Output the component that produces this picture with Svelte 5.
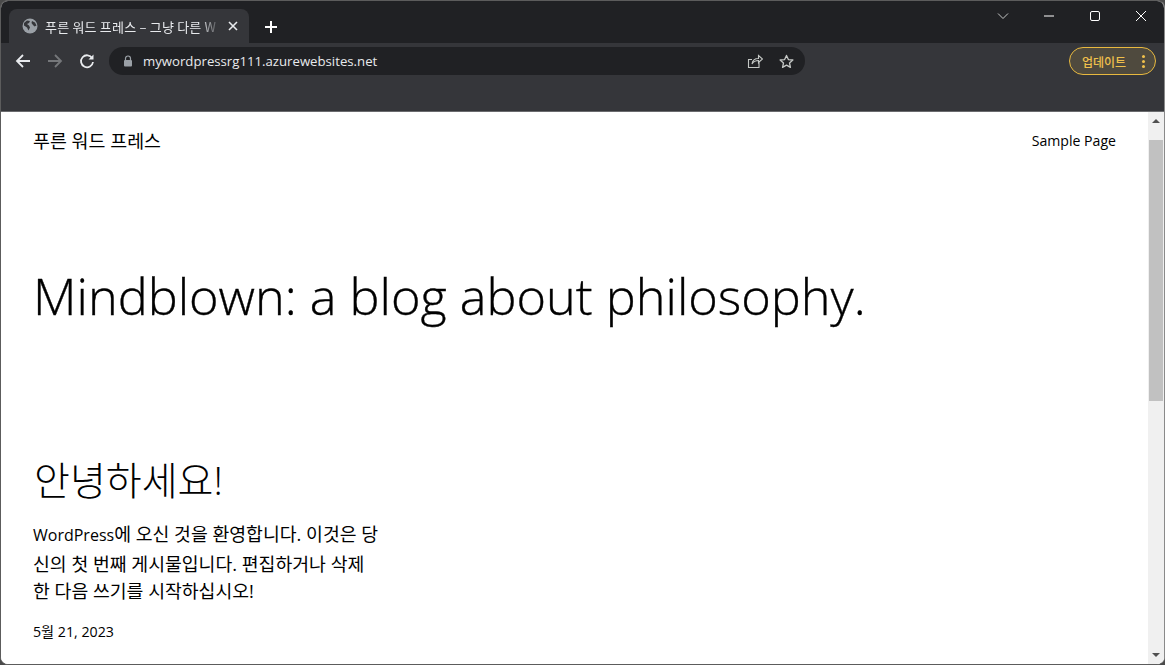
<script lang="ts">
	const bodyLines = [
		'신의 첫 번째 게시물입니다. 편집하거나 삭제',
		'한 다음 쓰기를 시작하십시오!'
	];
</script>

<div class="window">
	<header class="tabstrip">
		<div class="tab">
			<svg class="globe" width="16" height="16" viewBox="0 0 16 16">
				<circle cx="8" cy="8" r="7.5" fill="#9aa0a6" />
				<path d="M2 5l3-2.5 3 .5-1 2-2 1 2 1.5 1 2-1.5 3L5 9.5 2 7.5zM10 3l3 1.5 1.5 3-2 1-1.500-1.500L9.500 5z" fill="#35363a" />
			</svg>
			<span class="tab-title">푸른 워드 프레스 – 그냥 다른 W</span>
			<svg class="tab-close" width="10" height="10" viewBox="0 0 10 10">
				<path d="M1 1l8 8M9 1L1 9" stroke="#e8eaed" stroke-width="1.600" />
			</svg>
		</div>
		<svg class="new-tab" width="14" height="14" viewBox="0 0 14 14">
			<path d="M7 1v12M1 7h12" stroke="#fff" stroke-width="2" />
		</svg>
		<div class="window-controls">
			<svg width="12" height="8" viewBox="0 0 12 8"><path d="M1 1.500l5 5 5-5" fill="none" stroke="#c4c7c5" /></svg>
			<svg width="12" height="12" viewBox="0 0 12 12"><path d="M1 6h10" stroke="#fff" /></svg>
			<svg width="12" height="12" viewBox="0 0 12 12"><rect x="1.500" y="1.500" width="9" height="9" rx="1.500" fill="none" stroke="#fff" /></svg>
			<svg width="12" height="12" viewBox="0 0 12 12"><path d="M1 1l10 10M11 1L1 11" stroke="#fff" /></svg>
		</div>
	</header>

	<div class="toolbar">
		<div class="nav-row">
			<div class="nav-icons">
				<svg width="16" height="16" viewBox="0 0 16 16"><path d="M15 8H2M8 2L2 8l6 6" fill="none" stroke="#e8eaed" stroke-width="1.800" /></svg>
				<svg width="16" height="16" viewBox="0 0 16 16"><path d="M1 8h13M8 2l6 6-6 6" fill="none" stroke="#75777a" stroke-width="1.800" /></svg>
				<svg width="16" height="16" viewBox="0 0 16 16">
					<path d="M13.200 5.200A6 6 0 1 0 14 9" fill="none" stroke="#e8eaed" stroke-width="1.800" />
					<path d="M14.500 1.500v5h-5z" fill="#e8eaed" />
				</svg>
			</div>
			<div class="omnibox">
				<svg class="lock" width="10" height="12" viewBox="0 0 10 12">
					<path d="M2.500 5V3.500a2.500 2.500 0 0 1 5 0V5" fill="none" stroke="#9aa0a6" stroke-width="1.200" />
					<rect x="1" y="5" width="8" height="6.500" rx="1" fill="#9aa0a6" />
				</svg>
				<span class="url">mywordpressrg111.azurewebsites.net</span>
				<svg class="share" width="16" height="15" viewBox="0 0 16 15">
					<path d="M12 8.500V13.500H1.500V5.500H5M5 10c.5-3.500 3-5.500 6.500-5.500V1.500L15.500 5l-4 3.500V6.500C9 6.500 6.500 7.500 5 10z" fill="none" stroke="#c4c7c5" stroke-width="1.100" />
				</svg>
				<svg class="star" width="15" height="15" viewBox="0 0 16 16">
					<path d="M8 1.500l2 4.400 4.800.5-3.600 3.200 1 4.700L8 11.900l-4.200 2.400 1-4.700L1.200 6.400 6 5.900z" fill="none" stroke="#c4c7c5" stroke-width="1.400" stroke-linejoin="round" />
				</svg>
			</div>
			<button class="update" type="button">
				<span>업데이트</span>
				<span class="dots"><i></i><i></i><i></i></span>
			</button>
		</div>
	</div>

	<div class="viewport">
		<main class="page">
			<nav class="site-nav">
				<span class="site-title">푸른 워드 프레스</span>
				<span class="nav-link">Sample Page</span>
			</nav>
			<h1>Mindblown: a blog about philosophy.</h1>
			<article class="post">
				<h2>안녕하세요!</h2>
				<p>
					<span class="line"><span class="latin">WordPress</span>에 오신 것을 환영합니다. 이것은 당</span>
					{#each bodyLines as line}
						<span class="line">{line}</span>
					{/each}
				</p>
				<time>5월 21, 2023</time>
			</article>
		</main>
		<aside class="scrollbar">
			<span class="arrow up"></span>
			<div class="track"><div class="thumb"></div></div>
			<span class="arrow down"></span>
		</aside>
	</div>
</div>

<style>
	:global(body) {
		margin: 0;
		background: #4a4a4a;
		overflow: hidden;
	}

	.window {
		width: 1165px;
		height: 665px;
		display: flex;
		flex-direction: column;
		overflow: hidden;
		box-sizing: border-box;
		border: 1px solid #5c5c5c;
		border-right-color: #8a8a8a;
		border-radius: 8px;
		font-family: "Noto Sans CJK KR", sans-serif;
		background: #fff;
	}

	.tabstrip {
		height: 42px;
		flex: none;
		display: flex;
		align-items: flex-end;
		background: #202124;
		padding-left: 8px;
		position: relative;
	}

	.tab {
		width: 240px;
		height: 34px;
		display: flex;
		align-items: center;
		box-sizing: border-box;
		padding: 0 11px 0 13px;
		background: #35363a;
		border-radius: 8px 8px 0 0;
	}

	.globe {
		flex: none;
	}

	.tab-title {
		flex: 1;
		margin-left: 7px;
		font-size: 13px;
		letter-spacing: 0.2px;
		color: #e8eaed;
		white-space: nowrap;
		-webkit-mask-image: linear-gradient(to right, #000 88%, transparent);
		mask-image: linear-gradient(to right, #000 88%, transparent);
	}

	.tab-close {
		flex: none;
		margin-left: 7px;
	}

	.new-tab {
		margin: 0 0 9px 15px;
	}

	.window-controls {
		position: absolute;
		top: 9px;
		right: 17px;
		display: flex;
		align-items: center;
		gap: 34px;
	}

	.toolbar {
		height: 68px;
		flex: none;
		background: #35363a;
		border-bottom: 1px solid #6a6b6e;
		box-sizing: content-box;
	}

	.nav-row {
		height: 36px;
		display: flex;
		align-items: center;
		padding: 0 8px 0 14px;
	}

	.nav-icons {
		display: flex;
		gap: 16px;
	}

	.omnibox {
		width: 696px;
		height: 28px;
		margin-left: 14px;
		display: flex;
		align-items: center;
		box-sizing: border-box;
		padding: 0 11px 0 14px;
		background: #202124;
		border-radius: 14px;
	}

	.lock {
		flex: none;
	}

	.url {
		flex: 1;
		margin-left: 10px;
		font-family: "Open Sans", sans-serif;
		font-size: 13.2px;
		color: #e8eaed;
	}

	.share {
		margin-right: 16px;
	}

	.update {
		margin-left: auto;
		width: 87px;
		height: 28px;
		display: flex;
		align-items: center;
		justify-content: space-between;
		box-sizing: border-box;
		padding: 0 10px 0 12px;
		border: 1px solid #e8b93f;
		border-radius: 14px;
		background: #4f4a3e;
		color: #f0c04c;
		font-family: inherit;
		font-size: 12px;
		font-weight: 500;
	}

	.dots {
		display: flex;
		flex-direction: column;
		gap: 2px;
	}

	.dots i {
		width: 3px;
		height: 3px;
		border-radius: 50%;
		background: #f0c04c;
	}

	.viewport {
		flex: 1;
		min-height: 0;
		display: flex;
		background: #fff;
	}

	.page {
		flex: 1;
		min-width: 0;
		padding: 0 32px;
		color: #000;
		font-family: "Open Sans", "Noto Sans CJK KR", sans-serif;
	}

	.site-nav {
		height: 56px;
		display: flex;
		align-items: center;
		justify-content: space-between;
	}

	.site-title {
		font-size: 18.4px;
	}

	.nav-link {
		font-size: 14.1px;
	}

	h1 {
		margin: 0;
		padding: 97px 0 83px;
		font-size: 50.4px;
		line-height: 62px;
		font-weight: 300;
		-webkit-text-stroke: 0.35px #000;
		white-space: nowrap;
	}

	.post {
		padding-top: 45px;
	}

	h2 {
		margin: 0 0 0 1px;
		font-size: 39px;
		line-height: 50px;
		font-weight: 300;
	}

	.post p {
		margin: 15px 0 0;
		font-size: 18.300px;
		line-height: 27.700px;
	}

	.latin {
		font-size: 16px;
	}

	.line {
		display: block;
		white-space: nowrap;
	}

	time {
		display: block;
		margin-top: 16px;
		font-size: 14.2px;
	}

	.scrollbar {
		width: 16px;
		flex: none;
		display: flex;
		flex-direction: column;
		align-items: center;
		background: #f0f0f0;
	}

	.track {
		flex: 1;
		width: 100%;
		padding: 10px 1px 0;
		box-sizing: border-box;
	}

	.thumb {
		height: 261px;
		background: #c1c1c1;
	}

	.arrow {
		flex: none;
		width: 0;
		height: 0;
		margin: 7px 0;
		border-left: 4px solid transparent;
		border-right: 4px solid transparent;
	}

	.arrow.up {
		border-bottom: 4px solid #505050;
	}

	.arrow.down {
		border-top: 4px solid #505050;
	}
</style>
